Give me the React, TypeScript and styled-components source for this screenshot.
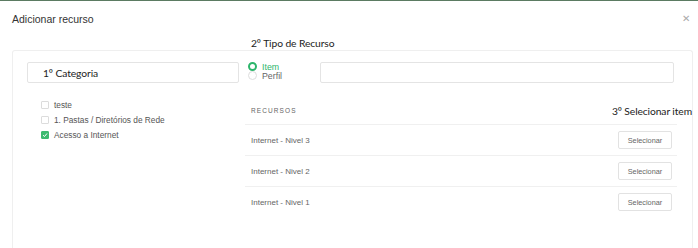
import styled, { createGlobalStyle } from 'styled-components';

const GlobalStyle = createGlobalStyle`
  body {
    margin: 0;
    background: #fff;
    font-family: 'Liberation Sans', Arial, sans-serif;
  }
`;

const Modal = styled.div`
  width: 698px;
  height: 248px;
  overflow: hidden;
  border-top: 1px solid #5b7b62;
  box-sizing: border-box;
`;

const Header = styled.div`
  display: flex;
  justify-content: space-between;
  align-items: center;
  padding: 11px 8px 0 12px;
  height: 14px;
`;

const Title = styled.h4`
  margin: 0;
  font-size: 10.5px;
  font-weight: normal;
  color: #333;
`;

const Close = styled.span`
  font-size: 10px;
  color: #aaa;
  line-height: 14px;
`;

const Note = styled.div`
  font-family: Lato, 'Open Sans', sans-serif;
  font-size: 10.3px;
  letter-spacing: -0.1px;
  color: #222;
  line-height: 14px;
  white-space: nowrap;
`;

const Caption = styled(Note)`
  padding: 10px 0 0 251px;
`;

const Panel = styled.div`
  margin-left: 12px;
  width: 681px;
  height: 220px;
  box-sizing: border-box;
  border: 1px solid #efefef;
  border-bottom: none;
  border-radius: 3px 3px 0 0;
  padding: 11px 15px 0 14px;
  display: grid;
  grid-template-columns: 212px 1fr;
  grid-template-rows: 21px auto;
  column-gap: 6px;
  row-gap: 14px;
`;

const TextBox = styled.div`
  height: 21px;
  box-sizing: border-box;
  border: 1px solid #e4e4e4;
  border-radius: 2px;
  display: flex;
  align-items: center;
  padding-left: 15px;
`;

const TypeRow = styled.div`
  display: flex;
  align-items: flex-start;
  padding-left: 3px;
`;

const RadioGroup = styled.div`
  width: 72px;
  display: flex;
  flex-direction: column;
`;

const RadioOption = styled.label<{ $active?: boolean }>`
  display: flex;
  align-items: center;
  gap: 5px;
  height: 9px;
  font-size: 8.8px;
  color: ${(p) => (p.$active ? '#2db56b' : '#666')};
`;

const RadioDot = styled.span<{ $active?: boolean }>`
  width: 9px;
  height: 9px;
  box-sizing: border-box;
  border-radius: 50%;
  border: ${(p) => (p.$active ? '2.7px solid #2db56b' : '1px solid #ddd')};
  background: #fff;
`;

const SearchBox = styled(TextBox)`
  flex: 1;
  margin: 0 3px 0 0;
`;

const CategoryList = styled.ul`
  list-style: none;
  margin: 0;
  padding: 0 0 0 14px;
`;

const CategoryItem = styled.li`
  display: flex;
  align-items: center;
  gap: 5px;
  height: 15px;
  font-size: 8.3px;
  color: #555;
`;

const Check = styled.span<{ $checked?: boolean }>`
  width: 8px;
  height: 8px;
  box-sizing: border-box;
  border-radius: 1px;
  border: 1px solid ${(p) => (p.$checked ? '#3cba6f' : '#dcdcdc')};
  background: ${(p) => (p.$checked ? '#3cba6f' : '#fff')};
  display: flex;
  align-items: center;
  justify-content: center;
`;

const ResourceTable = styled.div`
  display: flex;
  flex-direction: column;
`;

const TableHead = styled.div`
  height: 27px;
  display: flex;
  align-items: center;
  justify-content: space-between;
  padding-left: 6px;
  border-bottom: 1px solid #f0f0f0;
`;

const HeadLabel = styled.span`
  font-size: 6.5px;
  letter-spacing: 1.1px;
  color: #666;
`;

const StepNote = styled(Note)`
  margin-right: -15px;
`;

const Row = styled.div`
  height: 30px;
  display: flex;
  align-items: center;
  justify-content: space-between;
  padding: 0 5px 0 6px;
  border-bottom: 1px solid #f0f0f0;
  font-size: 8px;
  color: #666;

  &:last-child {
    border-bottom: none;
  }
`;

const SelectButton = styled.button`
  width: 54px;
  height: 18px;
  padding: 0;
  border: 1px solid #e2e2e2;
  border-radius: 2px;
  background: #fff;
  font-family: inherit;
  font-size: 7.3px;
  color: #666;
`;

const resources = ['Internet - Nivel 3', 'Internet - Nivel 2', 'Internet - Nivel 1'];
const categories = [
  { name: 'teste', checked: false },
  { name: '1. Pastas / Diretórios de Rede', checked: false },
  { name: 'Acesso a Internet', checked: true },
];

export default function App() {
  return (
    <>
      <GlobalStyle />
      <Modal>
        <Header>
          <Title>Adicionar recurso</Title>
          <Close>✕</Close>
        </Header>
        <Caption>2º Tipo de Recurso</Caption>
        <Panel>
          <TextBox>
            <Note>1º Categoria</Note>
          </TextBox>
          <TypeRow>
            <RadioGroup>
              <RadioOption $active>
                <RadioDot $active />
                Item
              </RadioOption>
              <RadioOption>
                <RadioDot />
                Perfil
              </RadioOption>
            </RadioGroup>
            <SearchBox />
          </TypeRow>
          <CategoryList>
            {categories.map((c) => (
              <CategoryItem key={c.name}>
                <Check $checked={c.checked}>
                  {c.checked && (
                    <svg width="6" height="6" viewBox="0 0 6 6">
                      <path d="M1 3.2 L2.5 4.5 L5 1.5" fill="none" stroke="#fff" strokeWidth="1" />
                    </svg>
                  )}
                </Check>
                {c.name}
              </CategoryItem>
            ))}
          </CategoryList>
          <ResourceTable>
            <TableHead>
              <HeadLabel>RECURSOS</HeadLabel>
              <StepNote>3º Selecionar item</StepNote>
            </TableHead>
            {resources.map((r) => (
              <Row key={r}>
                {r}
                <SelectButton>Selecionar</SelectButton>
              </Row>
            ))}
          </ResourceTable>
        </Panel>
      </Modal>
    </>
  );
}
